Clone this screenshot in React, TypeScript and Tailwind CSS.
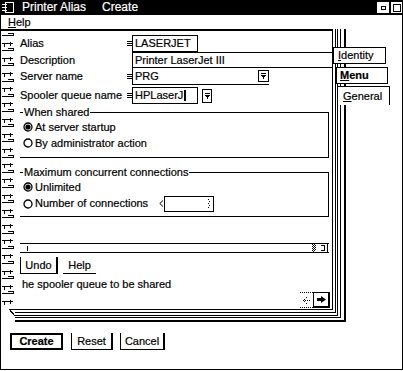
import React from "react";

const FONT = "font-['Liberation_Sans',Arial,sans-serif]";

function Spiral() {
  const rings = Array.from({ length: 36 }, (_, i) => i);
  return (
    <svg width="14" height="293" viewBox="0 0 14 293" className="block shrink-0" shapeRendering="crispEdges">
      <path d="M0 1 H14" stroke="#000" strokeWidth="2" />
      {rings.map((i) => {
        const y = Math.round(6 + i * 7.6) + 0.5;
        const d =
          i % 2 === 0
            ? `M1 ${y} H13 M12.5 ${y} V${y - 3} M7 ${y - 2.5} H13`
            : `M1 ${y} H12 M3.5 ${y} V${y + 3} M9.5 ${y - 2} V${y + 2}`;
        return <path key={i} d={d} stroke="#000" fill="none" />;
      })}
      <path d="M8 280.5 H14 M8 280 L14 287" stroke="#000" fill="none" />
    </svg>
  );
}

function Marker() {
  return (
    <svg width="5" height="7" viewBox="0 0 5 7" className="shrink-0" shapeRendering="crispEdges">
      <path d="M0 1.5 H5 M0 3.5 H5 M0 5.5 H5" stroke="#000" />
    </svg>
  );
}

function DropGlyph() {
  return (
    <svg width="7" height="8" viewBox="0 0 7 8" shapeRendering="crispEdges">
      <path d="M1 1.5 H6" stroke="#000" />
      <path d="M1 3 H6 L3.5 7 Z" fill="#000" />
    </svg>
  );
}

function Radio({ on }: { on?: boolean }) {
  return (
    <svg width="10" height="10" viewBox="0 0 10 10" className="shrink-0">
      <circle cx="5" cy="5" r="4" fill="#fff" stroke="#000" strokeWidth="1.3" />
      {on && <circle cx="5" cy="5" r="2.6" fill="#000" />}
    </svg>
  );
}

function Label({ children }: { children: React.ReactNode }) {
  return <span className="w-[107px] shrink-0">{children}</span>;
}

export default function App() {
  return (
    <div className={`${FONT} h-[371px] w-[403px] bg-white text-[11px] leading-[13px] text-black [-webkit-text-stroke:0.2px_#000]`}>
      {/* title bar */}
      <div className="flex h-[15px] items-center bg-black [-webkit-text-stroke:0.2px_#fff]">
        <svg className="ml-[2px]" width="12" height="13" viewBox="0 0 12 13" shapeRendering="crispEdges">
          <path d="M3.5 1.5 H11.5 V11.5 H3.5 Z" stroke="#fff" fill="none" />
          <path d="M0 3.5 H5 M0 6.5 H5 M0 9.5 H5" stroke="#fff" />
        </svg>
        <span className="ml-[8px] text-[12px] text-white">Printer Alias</span>
        <span className="ml-[16px] text-[12px] text-white">Create</span>
        <div className="ml-auto flex h-full pt-[1px]">
          <div className="flex h-[13px] w-[14px] items-center justify-center border border-black bg-white">
            <div className="h-[4px] w-[5px] border border-black" />
          </div>
          <div className="flex h-[13px] w-[13px] items-center justify-center border border-black bg-white">
            <div className="h-[8px] w-[8px] border border-black" />
          </div>
        </div>
      </div>

      {/* frame */}
      <div className="h-[355px] border-x border-b border-black">
        <div className="flex h-[14px] items-center pl-[7px]">
          <span>
            <span className="underline">H</span>elp
          </span>
        </div>

        {/* notebook */}
        <div className="relative flex h-[293px]">
          <Spiral />
          <div className="h-full w-[331px] border-r-2 border-b-2 border-black pr-[3px] pb-[2px]">
            <div className="h-full border-r border-b border-black pr-[2px] pb-[1px]">
              <div className="h-full border-r border-b border-black pr-[1px] pb-[2px]">
                <div className="h-full border-r border-b border-black pr-[2px] pb-[2px]">
                  <div className="flex h-full flex-col border-t-2 border-r border-b border-black pl-[5px]">
                    <div className="mt-[4px] flex h-[17px] items-center">
                      <Label>Alias</Label>
                      <Marker />
                      <div className="flex h-full w-[66px] items-center border border-black pl-[2px]">LASERJET</div>
                    </div>
                    <div className="flex h-[16px] items-center">
                      <Label>Description</Label>
                      <span className="w-[5px]" />
                      <div className="flex h-full flex-1 items-center border-y border-l border-black pl-[2px]">
                        Printer LaserJet III
                      </div>
                    </div>
                    <div className="flex h-[17px] items-center">
                      <Label>Server name</Label>
                      <Marker />
                      <div className="flex h-full w-[137px] items-center border-l border-b border-black pl-[2px]">
                        <span>PRG</span>
                        <div className="ml-auto flex h-[12px] w-[11px] items-center justify-center border border-black">
                          <DropGlyph />
                        </div>
                      </div>
                    </div>
                    <div className="mt-[2px] flex h-[17px] items-center">
                      <Label>Spooler queue name</Label>
                      <Marker />
                      <div className="flex h-full w-[66px] items-center border border-black pl-[2px]">
                        <span>HPLaserJ</span>
                        <span className="ml-[1px] h-[11px] w-[2px] bg-black" />
                      </div>
                      <div className="ml-[4px] flex h-[14px] w-[10px] items-center justify-center border border-black">
                        <DropGlyph />
                      </div>
                    </div>

                    <fieldset className="mt-[2px] mr-[3px] border-y border-r border-l-0 border-black pb-[6px]">
                      <legend className="ml-[3px] px-[1px]">When shared</legend>
                      <div className="flex h-[16px] items-center gap-[2px] pl-[3px]">
                        <Radio on />
                        <span>At server startup</span>
                      </div>
                      <div className="flex h-[16px] items-center gap-[2px] pl-[3px]">
                        <Radio />
                        <span>By administrator action</span>
                      </div>
                    </fieldset>

                    <fieldset className="mt-[8px] mr-[3px] border-y border-r border-l-0 border-black pb-[4px]">
                      <legend className="ml-[3px] px-[1px]">Maximum concurrent connections</legend>
                      <div className="flex h-[16px] items-center gap-[2px] pl-[3px]">
                        <Radio on />
                        <span>Unlimited</span>
                      </div>
                      <div className="flex h-[17px] items-center pl-[3px]">
                        <Radio />
                        <span className="ml-[2px] w-[124px]">Number of connections</span>
                        <svg width="5" height="7" viewBox="0 0 5 7" className="shrink-0">
                          <path d="M4 0.5 L0.8 3.5 L4 6.5" stroke="#000" fill="none" />
                        </svg>
                        <div className="flex h-[16px] w-[50px] items-center justify-end border border-black pr-[3px]">
                          <svg width="2" height="9" viewBox="0 0 2 9" shapeRendering="crispEdges">
                            <path d="M0 0h1v1H0zM1 2h1v1H1zM0 4h1v1H0zM1 6h1v1H1zM0 8h1v1H0z" fill="#000" />
                          </svg>
                        </div>
                      </div>
                    </fieldset>

                    <div className="mt-[26px] mr-[3px] flex h-[10px] items-center border-y border-black">
                      <div className="ml-[7px] h-[5px] w-px bg-black" />
                      <svg className="ml-auto" width="17" height="8" viewBox="0 0 17 8" shapeRendering="crispEdges">
                        <path
                          d="M0 0h1v1H0zM2 0h1v1H2zM1 1h1v1H1zM3 1h1v1H3zM0 2h1v1H0zM2 2h1v1H2zM1 3h1v1H1zM3 3h1v1H3zM0 4h1v1H0zM2 4h1v1H2zM1 5h1v1H1zM3 5h1v1H3zM0 6h1v1H0zM2 6h1v1H2zM1 7h1v1H1z"
                          fill="#000"
                        />
                        <path d="M9 1.5 H12 V6.5 H9 M15.5 0 V8" stroke="#000" fill="none" />
                      </svg>
                    </div>

                    <div className="mt-[4px] flex h-[17px] gap-[5px]">
                      <div className="flex w-[38px] items-center justify-center border-l border-b border-r-2 border-black">
                        Undo
                      </div>
                      <div className="flex w-[33px] items-center justify-center border-b border-black">Help</div>
                    </div>

                    <div className="mt-[4px] h-[12px] pl-[2px] leading-[12px]">he spooler queue to be shared</div>

                    <div className="mt-auto mr-[2px] mb-[1px] flex h-[16px] justify-end">
                      <div className="flex w-[13px] items-center justify-center border-y border-dotted border-black">
                        <svg width="8" height="7" viewBox="0 0 8 7" shapeRendering="crispEdges">
                          <path d="M3 0h1v1H3zM1 2h1v1H1zM0 3h1v1H0zM2 3h1v1H2zM4 3h1v1H4zM6 3h1v1H6zM1 4h1v1H1zM3 6h1v1H3z" fill="#000" />
                        </svg>
                      </div>
                      <div className="flex w-[17px] items-center justify-center border border-r-2 border-b-2 border-black">
                        <svg width="9" height="7" viewBox="0 0 9 7">
                          <path d="M0 2 H4 V0 L9 3.5 L4 7 V5 H0 Z" fill="#000" />
                        </svg>
                      </div>
                    </div>
                  </div>
                </div>
              </div>
            </div>
          </div>

          {/* tabs */}
          <div className="absolute top-[18px] left-[332px] flex h-[17px] w-[53px] items-center border border-black bg-white pl-[4px]">
            <span>
              <span className="underline">I</span>dentity
            </span>
          </div>
          <div className="absolute top-[38px] left-[334px] flex h-[17px] w-[53px] items-center border border-l-2 border-black bg-white pl-[3px] font-bold">
            <span>
              <span className="underline">M</span>enu
            </span>
          </div>
          <div className="absolute top-[57px] left-[336px] flex h-[19px] w-[53px] items-center border-x border-t border-black bg-white pl-[5px]">
            <span>
              <span className="underline">G</span>eneral
            </span>
          </div>
        </div>

        {/* dialog buttons */}
        <div className="mt-[11px] ml-[9px] flex h-[17px]">
          <div className="flex w-[53px] items-center justify-center border-2 border-black font-bold">Create</div>
          <div className="ml-[8px] flex w-[42px] items-center justify-center border-l border-b border-r-2 border-black">
            Reset
          </div>
          <div className="ml-[7px] flex w-[45px] items-center justify-center border-l border-b border-r-2 border-black">
            Cancel
          </div>
        </div>
      </div>
    </div>
  );
}
